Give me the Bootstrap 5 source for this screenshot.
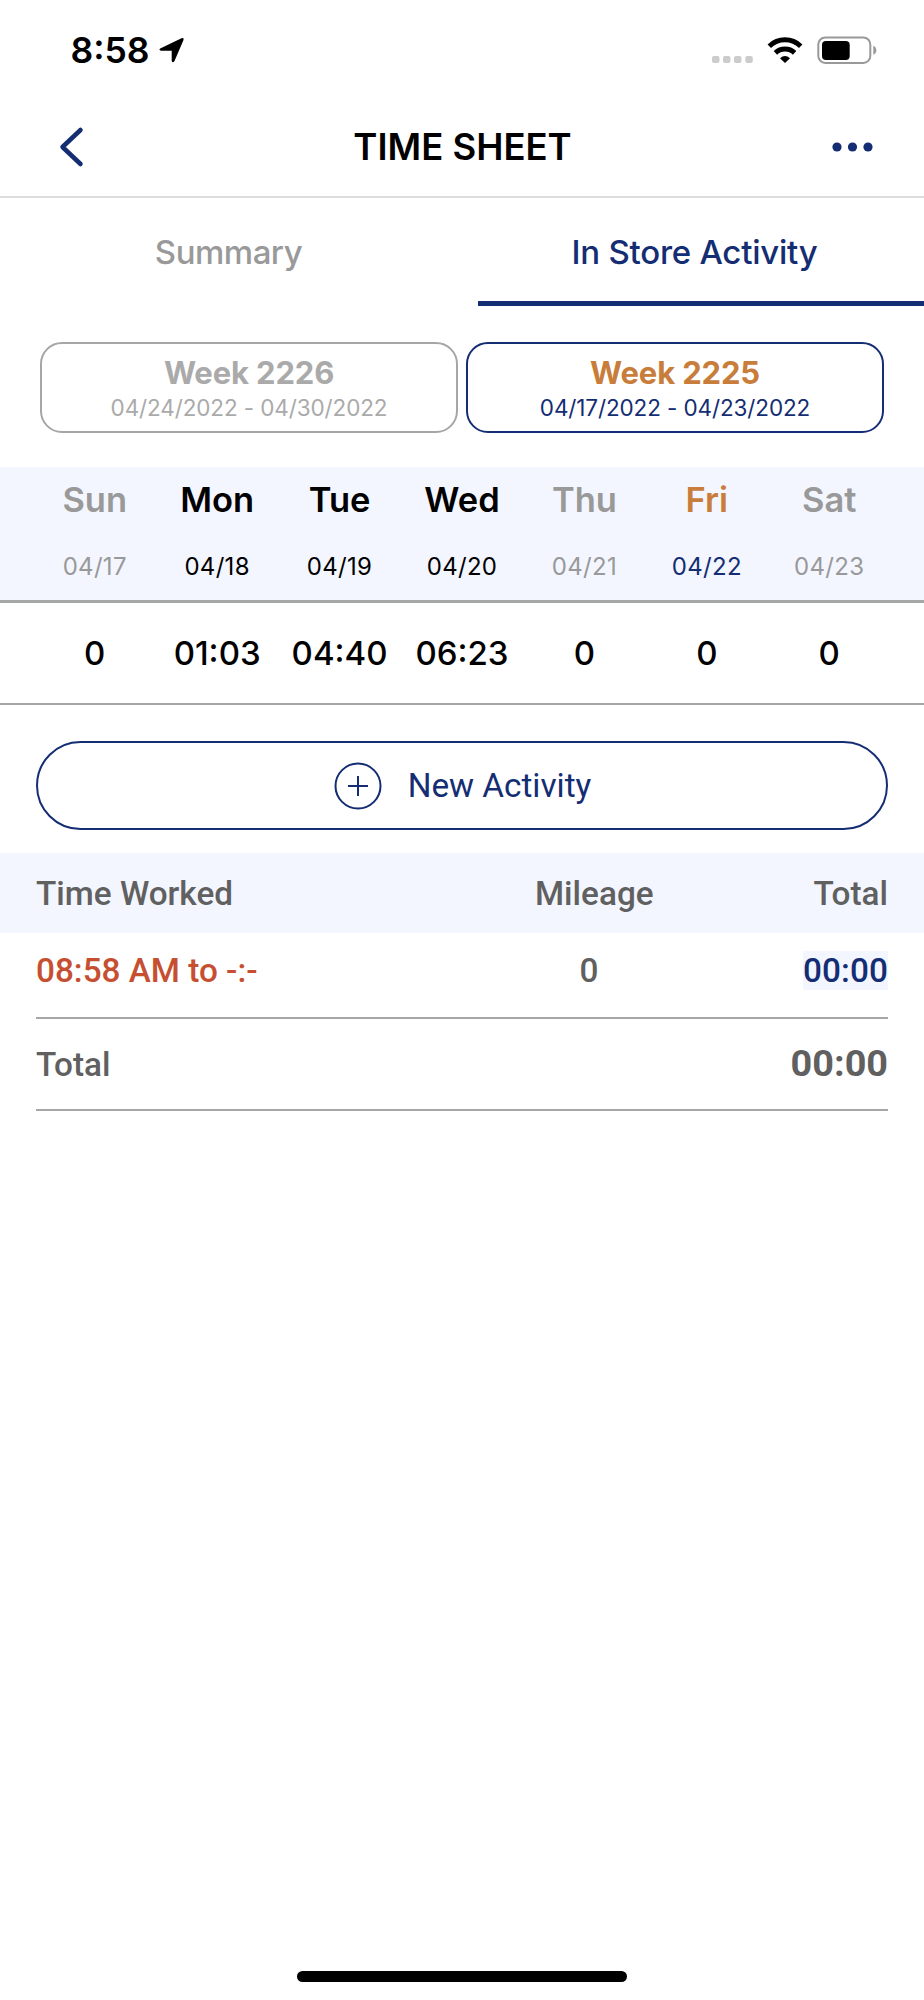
<!DOCTYPE html>
<html lang="en">
<head>
<meta charset="utf-8">
<meta name="viewport" content="width=device-width, initial-scale=1">
<title>Time Sheet</title>
<link href="https://cdn.jsdelivr.net/npm/bootstrap@5.3.0/dist/css/bootstrap.min.css" rel="stylesheet">
<style>
  :root { --navy: #142d73; --line: #a5a7a6; --mute: #999; --tint: #f3f6ff; --amber: #c87d3b; }
  body { font-family: Inter, "Liberation Sans", sans-serif; color: #000; background: #fff; }
  .screen { width: 924px; height: 2000px; overflow: hidden; }
  .status { height: 102px; padding: 0 46px 0 70.5px; }
  .clock { font-size: 35.5px; font-weight: 600; line-height: 102px; }
  .titlebar { display: grid; grid-template-columns: 1fr auto 1fr; align-items: center; height: 96px; padding: 0 50px 4px 59px; border-bottom: 2px solid #dcdcdc; }
  .titlebar h1 { font-size: 36.5px; font-weight: 600; line-height: 90px; padding-right: 8px; }
  .tabs { height: 108px; }
  .tab-item { width: 457px; padding-top: 34px; font-size: 33px; font-weight: 500; line-height: 41px; letter-spacing: -.5px; color: var(--mute); }
  .tab-item.on { width: 446px; padding-right: 13px; letter-spacing: -.25px; color: var(--navy); border-bottom: 5px solid var(--navy); }
  .weeks { padding: 36px 40px 34px; gap: 8px; }
  .week { flex: 1 0 0; height: 91px; border: 2px solid var(--line); border-radius: 22px; color: #aaa; padding-top: 10px; }
  .week b { font-size: 31px; line-height: 38px; font-weight: 700; letter-spacing: -.15px; }
  .week small { font-size: 22.5px; line-height: 32px; letter-spacing: -.12px; }
  .week.on { border-color: var(--navy); color: var(--navy); }
  .week.on b, .today b { color: var(--amber); }
  .days { height: 136px; background: var(--tint); border-bottom: 3px solid var(--line); padding: 0 33.5px; }
  .day b, .day small { display: block; }
  .day b { font-size: 34.5px; line-height: 66px; font-weight: 600; }
  .day small { font-size: 24px; line-height: 68px; letter-spacing: .3px; }
  .off { color: var(--mute); }
  .today { color: var(--navy); }
  .hours { height: 102px; border-bottom: 2px solid var(--line); padding: 0 33.5px; font-size: 33px; font-weight: 500; line-height: 101px; }
  .col7 { flex: 1 0 0; width: 0; text-align: center; white-space: nowrap; }
  .roboto { font-family: Roboto, sans-serif; font-size: 33.3px; }
  .new-btn { margin: 36px 36px 23px; height: 89px; border: 2px solid var(--navy); border-radius: 45px; color: var(--navy); gap: 26px; background: #fff; padding: 0 0 0 1px; }
  .grid3 { display: grid; grid-template-columns: 453px 200px 1fr; margin: 0 36px; font-weight: 500; color: #606060; }
  .thead-band { height: 80px; background: var(--tint); line-height: 81px; }
  .thead-band .miles { padding-left: 46px; }
  .entry { height: 86px; border-bottom: 2px solid var(--line); line-height: 39px; padding-top: 18px; }
  .sum { height: 92px; border-bottom: 2px solid var(--line); line-height: 91px; }
  .started { color: #c64f31; }
  .chip { display: inline-block; color: var(--navy); background: var(--tint); letter-spacing: .1px; }
  .grand { font-size: 37.8px; font-weight: 700; line-height: 88px; }
  .home-bar { width: 330px; height: 11px; border-radius: 6px; background: #000; margin-bottom: 18px; }
</style>
</head>
<body>
<div class="screen d-flex flex-column">
  <div class="status d-flex align-items-center">
    <span class="clock">8:58</span>
    <svg class="ms-2" width="28" height="28" viewBox="0 0 28 28"><path d="M2.200 11.600 23.500 1.300q2.800-.9 2 1.700L16.500 24q-1.700 2.500-2.800 0V13.800H3q-2.600-.8-.8-2.200Z"/></svg>
    <svg class="ms-auto" width="170" height="30" viewBox="0 0 170 30">
      <g fill="#ccc"><rect x="4" y="20" width="7.500" height="7" rx="2"/><rect x="15" y="20" width="7.500" height="7" rx="2"/><rect x="26" y="20" width="7.500" height="7" rx="2"/><rect x="37.300" y="20" width="7.500" height="7" rx="2"/></g>
      <g fill="none" stroke="#000" stroke-width="5"><path d="M61.300 10.200a22.500 22.500 0 0 1 31.400 0"/><path d="M67.400 16.900a14 14 0 0 1 19.200 0"/></g>
      <path d="M72 22.200q5-4.400 10 0L77 27Z"/>
      <rect x="110.300" y="1.500" width="52" height="25.400" rx="7" fill="none" stroke="#999" stroke-width="2"/>
      <rect x="114" y="5" width="27.700" height="19" rx="4"/>
      <path d="M165.300 9.700q3 1.300 3 4.500t-3 4.500Z" fill="#999"/>
    </svg>
  </div>
  <div class="titlebar">
    <svg width="26" height="42" viewBox="0 0 26 42"><path d="M21.500 4 3.500 21l18 17" fill="none" stroke="#142d73" stroke-width="4.500" stroke-linecap="round" stroke-linejoin="round"/></svg>
    <h1 class="m-0">TIME SHEET</h1>
    <svg class="ms-auto" width="42" height="10"><g fill="#142d73"><circle cx="5" cy="5" r="4.600"/><circle cx="20.500" cy="5" r="4.600"/><circle cx="36" cy="5" r="4.600"/></g></svg>
  </div>
  <div class="tabs d-flex justify-content-between text-center">
    <div class="tab-item">Summary</div>
    <div class="tab-item on">In Store Activity</div>
  </div>
  <div class="weeks d-flex text-center">
    <div class="week d-flex flex-column"><b>Week 2226</b><small>04/24/2022 - 04/30/2022</small></div>
    <div class="week on d-flex flex-column"><b>Week 2225</b><small>04/17/2022 - 04/23/2022</small></div>
  </div>
  <div class="days d-flex">
    <div class="col7 day off"><b>Sun</b><small>04/17</small></div>
    <div class="col7 day"><b>Mon</b><small>04/18</small></div>
    <div class="col7 day"><b>Tue</b><small>04/19</small></div>
    <div class="col7 day"><b>Wed</b><small>04/20</small></div>
    <div class="col7 day off"><b>Thu</b><small>04/21</small></div>
    <div class="col7 day today"><b>Fri</b><small>04/22</small></div>
    <div class="col7 day off"><b>Sat</b><small>04/23</small></div>
  </div>
  <div class="hours d-flex">
    <div class="col7">0</div>
    <div class="col7">01:03</div>
    <div class="col7">04:40</div>
    <div class="col7">06:23</div>
    <div class="col7">0</div>
    <div class="col7">0</div>
    <div class="col7">0</div>
  </div>
  <button class="new-btn roboto d-flex align-items-center justify-content-center">
    <svg width="48" height="48" viewBox="0 0 48 48" fill="none" stroke="#142d73" stroke-width="2"><circle cx="24" cy="24" r="22.500"/><path d="M24 14v20M14 24h20"/></svg>
    <span>New Activity</span>
  </button>
  <div class="thead-band roboto">
    <div class="grid3"><span>Time Worked</span><span class="miles">Mileage</span><span class="text-end">Total</span></div>
  </div>
  <div class="grid3 entry roboto"><span class="started">08:58 AM to -:-</span><span class="text-center">0</span><span class="text-end"><span class="chip">00:00</span></span></div>
  <div class="grid3 sum roboto"><span>Total</span><span></span><span class="grand text-end">00:00</span></div>
  <div class="home-bar mt-auto mx-auto"></div>
</div>
<script src="https://cdn.jsdelivr.net/npm/bootstrap@5.3.0/dist/js/bootstrap.bundle.min.js"></script>
</body>
</html>
